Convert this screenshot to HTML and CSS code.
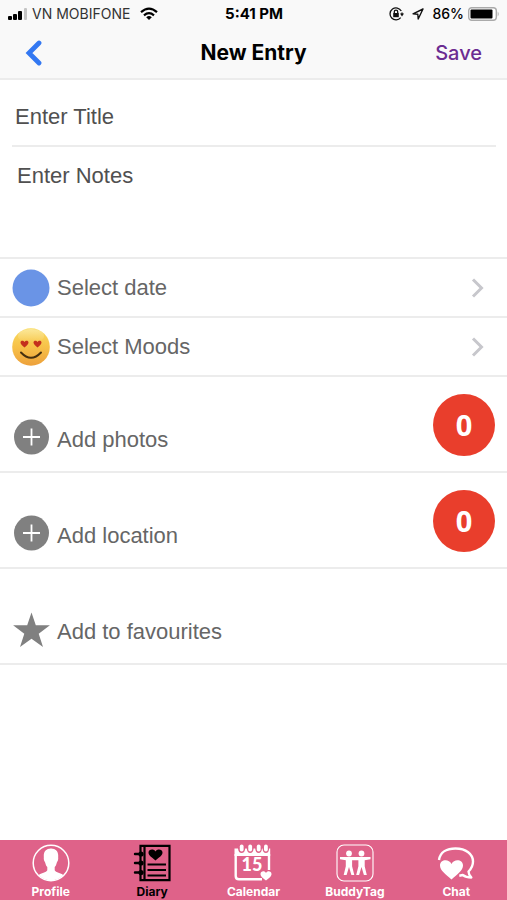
FILE: index.html
```html
<!DOCTYPE html>
<html lang="en">
<head>
<meta charset="utf-8">
<meta name="viewport" content="width=device-width, initial-scale=1">
<title>New Entry</title>
<link rel="stylesheet" href="styles.css">
</head>
<body>
<header class="top">
  <div class="status">
    <div class="status-left">
      <svg width="20" height="12" viewBox="0 0 20 12" aria-hidden="true"><rect x="0" y="8" width="4" height="4" rx="1"/><rect x="5" y="6" width="4" height="6" rx="1"/><rect x="10" y="3" width="4" height="9" rx="1"/><rect x="16" y="0" width="3" height="12" rx="1" fill="#c4c4c4"/></svg>
      <span class="carrier">VN MOBIFONE</span>
      <svg class="wifi" width="18" height="14" viewBox="0 0 18 14" fill="none" stroke="#000" stroke-width="2.2" aria-hidden="true"><path d="M1 5.2Q9-1.8 17 5.2M4 8.3Q9 4 14 8.3"/><path d="M6.2 10.2Q9 8 11.8 10.2L9 13z" fill="#000" stroke="none"/></svg>
    </div>
    <span class="time">5:41 PM</span>
    <div class="status-right">
      <svg width="15" height="14" viewBox="0 0 15 14" fill="none" stroke="#111" stroke-width="1.3" aria-hidden="true"><path d="M12.3 4A6 6 0 1 0 11.7 10.7M13 5.5V7.5"/><path d="M11 6.6h4l-2 2.8z" fill="#111" stroke="none"/><rect x="4.2" y="6" width="5.6" height="4.2" fill="#111" stroke="none"/><path d="M5.3 6V4.8a1.7 1.7 0 0 1 3.4 0V6"/></svg>
      <svg class="arrow" width="12" height="12" viewBox="0 0 12 12" fill="none" stroke="#111" stroke-width="1.4" stroke-linejoin="round" aria-hidden="true"><path d="M11 1 1 5.8l4.8.5.4 4.7z"/></svg>
      <span class="percent">86%</span>
      <svg width="32" height="14" viewBox="0 0 32 14" aria-hidden="true"><rect x="0.7" y="0.7" width="27.6" height="12.6" rx="3" fill="#fff" stroke="#aaa" stroke-width="1.4"/><rect x="2.5" y="2.5" width="22" height="9" rx="1"/><path d="M29.7 4.5q2 2.5 0 5z" fill="#aaa"/></svg>
    </div>
  </div>
  <nav class="navbar">
    <button class="back" type="button" aria-label="Back"><svg width="17" height="26" viewBox="0 0 17 26" fill="none" stroke="#3378f2" stroke-width="4.8" stroke-linecap="round" stroke-linejoin="miter"><path d="M14 3 4 13l10 10"/></svg></button>
    <h1 class="title">New Entry</h1>
    <button class="save" type="button">Save</button>
  </nav>
</header>

<main class="form">
  <input class="field entry-title" type="text" placeholder="Enter Title" aria-label="Enter Title">
  <textarea class="field notes" placeholder="Enter Notes" aria-label="Enter Notes"></textarea>

  <button class="row" type="button">
    <svg class="icon" viewBox="0 0 38 38" aria-hidden="true"><circle cx="19" cy="19" r="18.5" fill="#6a94e6"/></svg>
    <span class="label">Select date</span>
    <svg class="chevron" viewBox="0 0 14 20" aria-hidden="true"><path d="m2 1.5 8.5 8.5L2 18.5"/></svg>
  </button>
  <button class="row" type="button">
    <svg class="icon" viewBox="0 0 38 38" aria-hidden="true">
      <defs>
        <linearGradient id="face" x1="0" y1="0" x2="0" y2="1"><stop offset="0" stop-color="#f9dc62"/><stop offset="0.5" stop-color="#f7c148"/><stop offset="1" stop-color="#eda03b"/></linearGradient>
        <linearGradient id="shine" x1="0" y1="0" x2="0" y2="1"><stop offset="0" stop-color="#fff" stop-opacity="0.35"/><stop offset="1" stop-color="#fff" stop-opacity="0"/></linearGradient>
      </defs>
      <circle cx="19" cy="19" r="18.8" fill="url(#face)"/>
      <ellipse cx="19" cy="8" rx="13" ry="7" fill="url(#shine)"/>
      <path id="eye" d="M12.5 19.6C10.5 17.8 8.5 16.5 8.5 14.6C8.5 12.5 11.4 12.1 12.500 14.100C13.600 12.100 16.500 12.500 16.500 14.600C16.500 16.500 14.500 17.800 12.500 19.600Z" fill="#c4301d"/>
      <use href="#eye" x="13"/>
      <path d="M9 24.500Q19 35 29 24.500" fill="none" stroke="#46300f" stroke-width="2" stroke-linecap="round"/>
    </svg>
    <span class="label">Select Moods</span>
    <svg class="chevron" viewBox="0 0 14 20" aria-hidden="true"><path d="m2 1.5 8.5 8.5L2 18.5"/></svg>
  </button>
  <button class="row tall" type="button">
    <svg class="icon" viewBox="0 0 38 38" aria-hidden="true"><circle cx="19.500" cy="19" r="17.500" fill="#808080"/><path d="M11 19h17M19.500 10.500v17" stroke="#fff" stroke-width="1.800"/></svg>
    <span class="label">Add photos</span>
    <span class="count">0</span>
  </button>
  <button class="row tall" type="button">
    <svg class="icon" viewBox="0 0 38 38" aria-hidden="true"><circle cx="19.500" cy="19" r="17.500" fill="#808080"/><path d="M11 19h17M19.500 10.500v17" stroke="#fff" stroke-width="1.800"/></svg>
    <span class="label">Add location</span>
    <span class="count">0</span>
  </button>
  <button class="row tall" type="button">
    <svg class="icon" viewBox="0 0 38 38" aria-hidden="true"><path d="m19.500 2.500 4.300 12.800h14.100L26.700 23.700 31 37l-11.500-8.200L8 37l4.300-13.300L1.100 15.300h14.100z" fill="#808080"/></svg>
    <span class="label">Add to favourites</span>
  </button>
</main>

<nav class="tabs">
  <a class="tab" href="#profile">
    <svg viewBox="0 0 38 38" aria-hidden="true"><circle cx="19" cy="19" r="17.800" fill="none" stroke="#fff" stroke-width="1.500"/><path d="M19 4.500c-5 0-7.500 3.300-7.200 8 .1 1.500-.2 2 .2 3.500.3 1.500 1 1.800 1.300 3 .5 2 1 3 2 4v3.300c-1 2.500-6.300 2.500-8.600 4.900a17.500 17.500 0 0 0 24.600 0c-2.300-2.400-7.600-2.400-8.600-4.900V23c1-1 1.500-2 2-4 .3-1.200 1-1.500 1.300-3 .4-1.500.1-2 .2-3.500.3-4.700-2.200-8-7.200-8z" fill="#fff"/></svg>
    <span>Profile</span>
  </a>
  <a class="tab active" href="#diary" aria-current="page">
    <svg viewBox="0 0 38 38" aria-hidden="true"><path d="M7.500 1.800h29v34.400h-29zM11.500 2v34" fill="none" stroke="#000" stroke-width="2.200"/><path d="M2 10h7M2 19h7M2 28.500h7" stroke="#000" stroke-width="2.400" stroke-linecap="round"/><circle cx="8" cy="10" r="2.600"/><circle cx="8" cy="19" r="2.600"/><circle cx="8" cy="28.500" r="2.600"/><path d="M22.500 16.500c-3-2.700-7-4.800-7-8 0-3.300 5.300-4 7-.9 1.700-3.100 7-2.400 7 .9 0 3.200-4 5.300-7 8z"/><path d="M14.500 20.500h18.500M14.500 26h18.500M14.500 31.500h18.500" stroke="#000" stroke-width="1.800"/></svg>
    <span>Diary</span>
  </a>
  <a class="tab" href="#calendar">
    <svg viewBox="0 0 38 38" aria-hidden="true"><path d="M28 35.300H5q-3.300 0-3.300-3.300V10M35 26V10" fill="none" stroke="#fff" stroke-width="2.400"/><path d="M.5 4.500H4q.5 4.500 3.600 4.500t3.600-4.500h1.600q.5 4.500 3.400 4.500t3.400-4.500h1.600q.5 4.500 3.400 4.500T28 4.500h.500q.5 4.500 3.400 4.500t3.200-4.500h1.100V12H.5z" fill="#fff"/><g fill="#fff"><rect x="5.800" y="0.500" width="3.800" height="7" rx="1.900"/><rect x="14.300" y="0.500" width="3.800" height="7" rx="1.900"/><rect x="22.800" y="0.500" width="3.800" height="7" rx="1.900"/><rect x="30" y="0.500" width="3.800" height="7" rx="1.900"/></g><path d="M32 36.500c-2.500-2.200-5.500-3.900-5.500-6.600 0-3 4.300-3.500 5.500-.9 1.200-2.600 5.500-2.100 5.500.9 0 2.700-3 4.400-5.500 6.600z" fill="#fff"/><text class="day" x="18" y="27" text-anchor="middle">15</text></svg>
    <span>Calendar</span>
  </a>
  <a class="tab" href="#buddytag">
    <svg viewBox="0 0 38 38" aria-hidden="true"><rect x="1" y="1" width="36" height="36" rx="7" fill="none" stroke="#fff" stroke-width="1.100"/><g fill="#fff"><circle cx="13" cy="9.500" r="2.900"/><circle cx="25.500" cy="9.500" r="2.900"/><path d="M4 13h30.500v2.200l-5.800 1v6L30.800 31h-2.900l-2.400-8-2.400 8h-2.900l2.200-8.800v-6h-6.300v6L18.300 31h-2.900L13 23l-2.400 8H7.700l2.100-8.800v-6L4 15.200z"/></g></svg>
    <span>BuddyTag</span>
  </a>
  <a class="tab" href="#chat">
    <svg viewBox="0 0 38 38" aria-hidden="true"><path d="M2 16C3 8 10 4.500 18.500 4.500 29 4.500 36 10 36 17.500c0 4.500-2 7.500-4.500 10 .2 3 1 4.500 2.800 6-3.500 0-6.300-.8-8.500-2.500l-3.500.7" fill="none" stroke="#fff" stroke-width="2.400" stroke-linejoin="round"/><path d="M14.500 35.500C8.500 30 3 26.500 3 21.500c0-6.200 8.800-7.300 11.500-1.500 2.700-5.800 11.500-4.700 11.500 1.500 0 5-5.500 8.500-11.500 14z" fill="#fff"/></svg>
    <span>Chat</span>
  </a>
</nav>
</body>
</html>
```

FILE: styles.css
```css
* { box-sizing: border-box; }

body {
  margin: 0;
  min-height: 100vh;
  display: flex;
  flex-direction: column;
  background: #fff;
  color: #555;
  font-family: "Liberation Sans", Arial, sans-serif;
}

button {
  padding: 0;
  border: 0;
  background: none;
  color: inherit;
  font: inherit;
}

svg { display: block; flex: none; }

.top {
  background: #f9f9f9;
  border-bottom: 2px solid #ececec;
  color: #000;
  font-family: Inter, "Liberation Sans", sans-serif;
}

.status {
  display: grid;
  grid-template-columns: 1fr auto 1fr;
  align-items: center;
  height: 27px;
  padding: 0 7px 0 8px;
  font-size: 14px;
}

.status-left, .status-right { display: flex; align-items: center; }
.status-left { gap: 4px; }
.status-right { justify-content: flex-end; gap: 4px; }
.carrier { color: #333; }
.wifi { margin-left: 6px; }
.time { font-size: 15px; font-weight: 700; }
.arrow { margin: 0 4px; }
.percent { font-weight: 500; }

.navbar {
  display: grid;
  grid-template-columns: 1fr auto 1fr;
  align-items: center;
  height: 51px;
  padding: 0 25px;
}

.back { justify-self: start; }
.title { margin: 0; font-size: 21px; font-weight: 700; }
.save { justify-self: end; color: #6b2c91; font-size: 20px; font-weight: 500; }

.form { flex: 1; display: flex; flex-direction: column; }

.field {
  display: block;
  border: 0;
  outline: 0;
  background: none;
  color: #444;
  font: 22px/28px "Liberation Sans", Arial, sans-serif;
  resize: none;
}

.field::placeholder { color: #505050; opacity: 1; }

.entry-title {
  height: 67px;
  margin: 0 11px 0 12px;
  padding: 8px 3px 0;
  border-bottom: 2px solid #ececec;
}

.notes {
  height: 112px;
  padding: 15px 17px;
  border-bottom: 2px solid #ececec;
}

.row {
  display: flex;
  align-items: center;
  gap: 7px;
  width: 100%;
  height: 59px;
  padding: 0 12px;
  border-bottom: 2px solid #ececec;
  text-align: left;
}

.icon { width: 38px; height: 38px; }

.label {
  flex: 1;
  color: #666;
  font-size: 22px;
  line-height: 28px;
}

.chevron {
  width: 14px;
  height: 20px;
  margin-right: 10px;
  fill: none;
  stroke: #c7c7cc;
  stroke-width: 3;
}

.tall {
  height: 96px;
  align-items: flex-end;
  padding-bottom: 15px;
}

.tall .label { padding-bottom: 2px; }

.count {
  width: 62px;
  height: 62px;
  border-radius: 50%;
  background: #e93e2c;
  color: #fff;
  font: 700 29px/62px "Open Sans", sans-serif;
  text-align: center;
}

.tabs {
  display: grid;
  grid-template-columns: repeat(5, 1fr);
  height: 60px;
  background: #df6289;
}

.tab {
  display: flex;
  flex-direction: column;
  align-items: center;
  padding-top: 4px;
  color: #fff;
  font: 700 12px/20px Inter, "Liberation Sans", sans-serif;
  text-decoration: none;
}

.tab svg { width: 38px; height: 38px; }
.active { color: #000; }
.day { fill: #fff; font: 900 18px Lato, sans-serif; }
```
